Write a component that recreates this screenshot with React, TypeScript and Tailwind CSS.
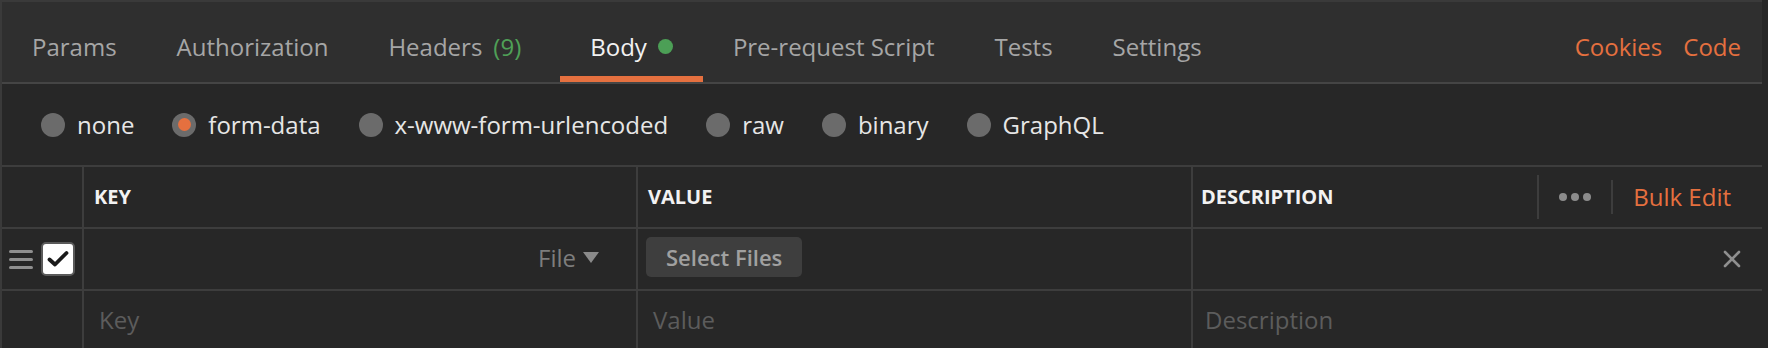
import React from "react";

const tabs = [
  { label: "Params" },
  { label: "Authorization" },
  { label: "Headers", count: "(9)" },
  { label: "Body", active: true, dot: true },
  { label: "Pre-request Script" },
  { label: "Tests" },
  { label: "Settings" },
];

const modes = ["none", "form-data", "x-www-form-urlencoded", "raw", "binary", "GraphQL"];

function Radio({ checked }: { checked?: boolean }) {
  return (
    <span className="flex h-[24px] w-[24px] items-center justify-center rounded-full bg-[#6b6b6b]">
      {checked && <span className="h-[13px] w-[13px] rounded-full bg-[#e5703f]" />}
    </span>
  );
}

export default function App() {
  return (
    <div
      className="h-[348px] w-[1768px] overflow-hidden bg-[#272727]"
      style={{ fontFamily: '"Open Sans", "Noto Sans", sans-serif' }}
    >
      <div className="w-[1762px] border-l-2 border-[#3a3a3a]">
        {/* request tabs */}
        <div className="flex h-[84px] items-stretch border-t-2 border-b-2 border-t-[#3a3a3a] border-b-[#454545] bg-[#2f2f2f]">
          <div className="flex">
            {tabs.map((t) => (
              <div
                key={t.label}
                className={
                  "flex items-center gap-[11px] border-b-[6px] pl-[30px] pt-[15px] text-[24px] " +
                  (t.count ? "pr-[39px] " : "pr-[30px] ") +
                  (t.active ? "border-[#e5703f] text-[#f2f2f2]" : "border-transparent text-[#a6a6a6]")
                }
              >
                <span>
                  {t.label}
                  {t.count && <span className="ml-[11px] text-[#4fa057]">{t.count}</span>}
                </span>
                {t.dot && <span className="h-[15px] w-[15px] rounded-full bg-[#4c9f56]" />}
              </div>
            ))}
          </div>
          <div className="ml-auto flex items-center gap-[21px] pr-[21px] pt-[9px] text-[24px] text-[#e5703f]">
            <span>Cookies</span>
            <span>Code</span>
          </div>
        </div>

        {/* body modes */}
        <div className="flex h-[81px] items-center gap-[38px] pl-[39px]">
          {modes.map((m) => (
            <div key={m} className="flex items-center gap-[12px] text-[24px] text-[#e6e6e6]">
              <Radio checked={m === "form-data"} />
              <span>{m}</span>
            </div>
          ))}
        </div>

        {/* key / value table */}
        <div className="border-t-2 border-[#3d3d3d]">
          <div className="grid h-[62px] grid-cols-[82px_554px_555px_1fr] border-b-2 border-[#3d3d3d] text-[20px] font-bold text-[#f2f2f2]">
            <div className="border-r-2 border-[#3d3d3d]" />
            <div className="flex items-center border-r-2 border-[#3d3d3d] pl-[10px]">KEY</div>
            <div className="flex items-center border-r-2 border-[#3d3d3d] pl-[10px]">VALUE</div>
            <div className="flex items-center pl-[8px]">
              <span>DESCRIPTION</span>
              <div className="ml-auto flex h-full items-center pr-[31px]">
                <div className="h-[44px] w-[2px] bg-[#3d3d3d]" />
                <div className="flex gap-[4px] px-[20px]">
                  <span className="h-[8px] w-[8px] rounded-full bg-[#8c8c8c]" />
                  <span className="h-[8px] w-[8px] rounded-full bg-[#8c8c8c]" />
                  <span className="h-[8px] w-[8px] rounded-full bg-[#8c8c8c]" />
                </div>
                <div className="h-[34px] w-[2px] bg-[#3d3d3d]" />
                <span className="pl-[20px] text-[24px] font-normal text-[#e5703f]">Bulk Edit</span>
              </div>
            </div>
          </div>

          <div className="grid h-[62px] grid-cols-[82px_554px_555px_1fr] border-b-2 border-[#3d3d3d] text-[24px]">
            <div className="flex items-center gap-[8px] border-r-2 border-[#3d3d3d] pl-[7px]">
              <svg width="24" height="19" viewBox="0 0 24 19">
                <rect x="0" y="0" width="24" height="3" rx="1.5" fill="#8f8f8f" />
                <rect x="0" y="8" width="24" height="3" rx="1.5" fill="#8f8f8f" />
                <rect x="0" y="16" width="24" height="3" rx="1.5" fill="#8f8f8f" />
              </svg>
              <span className="flex h-[34px] w-[34px] items-center justify-center rounded-[5px] border-2 border-[#5a5a5a] bg-white">
                <svg width="22" height="18" viewBox="0 0 22 18">
                  <path d="M2.5 9.5 L8 14.5 L19.5 3" fill="none" stroke="#1a1a1a" strokeWidth="3.8" strokeLinecap="round" strokeLinejoin="round" />
                </svg>
              </span>
            </div>
            <div className="flex items-center justify-end gap-[7px] border-r-2 border-[#3d3d3d] pb-[3px] pr-[37px] text-[#7d7d7d]">
              <span>File</span>
              <svg width="16" height="11" viewBox="0 0 16 11">
                <path d="M0 0 H16 L8 11 Z" fill="#8a8a8a" />
              </svg>
            </div>
            <div className="flex items-center border-r-2 border-[#3d3d3d] pb-[4px] pl-[8px]">
              <span className="flex h-[40px] items-center rounded-[5px] bg-[#3e3e3e] px-[20px] text-[22px] font-semibold text-[#a0a0a0]">
                Select Files
              </span>
            </div>
            <div className="flex items-center justify-end pr-[21px]">
              <svg width="18" height="18" viewBox="0 0 18 18">
                <path d="M2 2 L16 16 M16 2 L2 16" stroke="#8f8f8f" strokeWidth="2.6" strokeLinecap="round" />
              </svg>
            </div>
          </div>

          <div className="grid h-[60px] grid-cols-[82px_554px_555px_1fr] text-[24px] text-[#5c5c5c]">
            <div className="border-r-2 border-[#3d3d3d]" />
            <div className="flex items-center border-r-2 border-[#3d3d3d] pb-[2px] pl-[15px]">Key</div>
            <div className="flex items-center border-r-2 border-[#3d3d3d] pb-[2px] pl-[15px]">Value</div>
            <div className="flex items-center pb-[2px] pl-[12px]">Description</div>
          </div>
        </div>
      </div>
    </div>
  );
}
